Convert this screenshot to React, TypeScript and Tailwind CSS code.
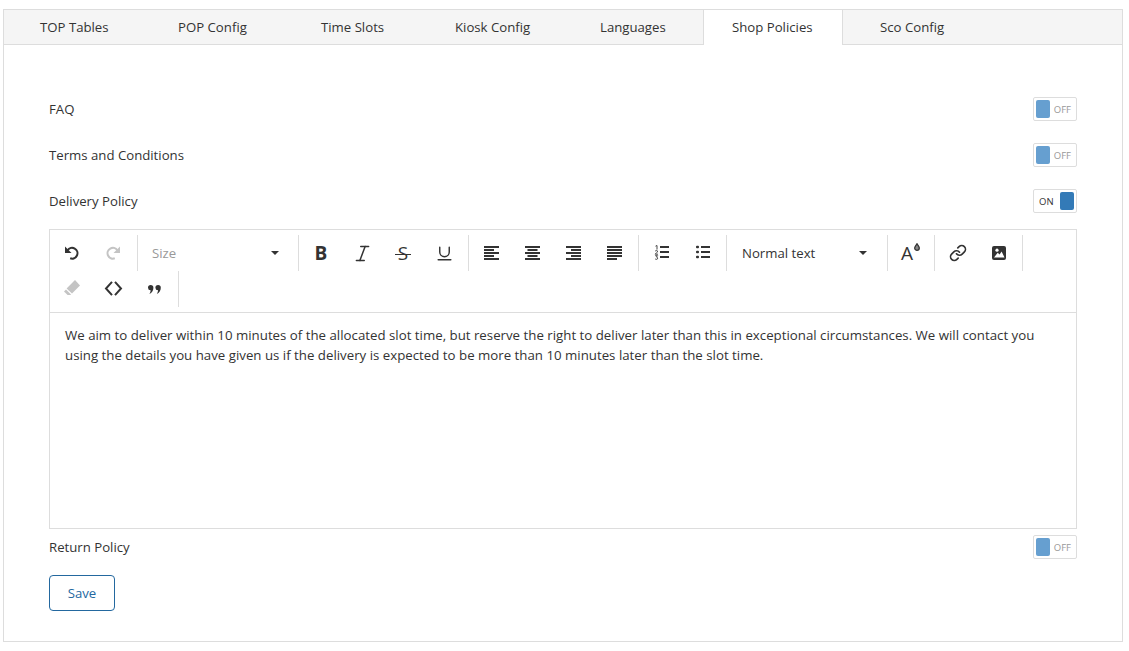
import React from "react";
import { Italic, Underline, Link } from "lucide-react";

const C = "#333";
const MUTED = "#c4c4c4";

function Toggle({ on }: { on?: boolean }) {
  return (
    <div className="w-[44px] h-[24px] border border-[#ddd] rounded-[2px] bg-white flex items-center justify-between px-[2px] text-[9.5px] leading-none">
      {on ? (
        <>
          <span className="ml-[3px] pt-[1px] text-[#333]">ON</span>
          <span className="w-[14px] h-[18px] rounded-[2px] bg-[#337ab7]" />
        </>
      ) : (
        <>
          <span className="w-[14px] h-[18px] rounded-[2px] bg-[#669fd0]" />
          <span className="mr-[3px] pt-[1px] text-[#999]">OFF</span>
        </>
      )}
    </div>
  );
}

function Row({ label, on, className }: { label: string; on?: boolean; className: string }) {
  return (
    <div className={"flex items-center justify-between h-[24px] " + className}>
      <span className="pt-[1px]">{label}</span>
      <Toggle on={on} />
    </div>
  );
}

function Btn({ children }: { children: React.ReactNode }) {
  return <div className="w-[41px] h-[36px] flex items-center justify-center text-[#333]">{children}</div>;
}

function Group({ children, flush }: { children: React.ReactNode; flush?: boolean }) {
  return <div className={"flex h-[36px] pr-[4px] border-r border-[#ddd] " + (flush ? "" : "pl-[1px]")}>{children}</div>;
}

function Caret() {
  return <span className="w-0 h-0 border-x-[4px] border-x-transparent border-t-[4px] border-t-[#333]" />;
}

function Svg({ children }: { children: React.ReactNode }) {
  return (
    <svg width="17" height="18" viewBox="0 0 17 18" className="shrink-0 overflow-visible">
      {children}
    </svg>
  );
}

function Bars({ rows }: { rows: [number, number][] }) {
  return (
    <Svg>
      {rows.map(([x, w], i) => (
        <rect key={i} x={x} y={2 + i * 3} width={w} height={2} fill={C} />
      ))}
    </Svg>
  );
}

function UndoIcon({ color, flip }: { color: string; flip?: boolean }) {
  return (
    <Svg>
      <g transform={flip ? "translate(18 0) scale(-1 1)" : undefined}>
        <path d="M2 2.5 L2 9 L8.5 9 Z" fill={color} />
        <path d="M4.6 6.2 A5.4 5.4 0 1 1 7.2 14.3" fill="none" stroke={color} strokeWidth="2" />
      </g>
    </Svg>
  );
}

function OlIcon() {
  return (
    <Svg>
      <rect x="8" y="2" width="9" height="2" fill={C} />
      <rect x="8" y="7" width="9" height="2" fill={C} />
      <rect x="8" y="12" width="9" height="2" fill={C} />
      <path d="M3.5 2.2 L5 1.5 V5.5" fill="none" stroke={C} strokeWidth="0.9" />
      <path d="M3.2 7 Q5 5.8 5.6 7 Q5.6 8 3.2 10.2 H6" fill="none" stroke={C} strokeWidth="0.9" />
      <path d="M3.2 11.7 H5.6 L4.4 13 Q6 13.3 5.6 14.8 Q4.8 15.8 3.2 15" fill="none" stroke={C} strokeWidth="0.9" />
    </Svg>
  );
}

function UlIcon() {
  return (
    <Svg>
      {[2, 7, 12].map((y) => (
        <g key={y}>
          <rect x="3" y={y - 0.25} width="3" height="2.5" rx="1" fill={C} />
          <rect x="8" y={y} width="9" height="2" fill={C} />
        </g>
      ))}
    </Svg>
  );
}

function ImageIcon() {
  return (
    <Svg>
      <rect x="3" y="2" width="14" height="14" rx="2" fill={C} />
      <circle cx="8" cy="6.2" r="1.6" fill="#fff" />
      <path d="M5 13.5 L8.7 8.8 L10.6 10.6 L12.6 7.4 L15.5 13.5 Z" fill="#fff" />
    </Svg>
  );
}

function EraserIcon() {
  return (
    <Svg>
      <path d="M12 0 L17 5.5 L9 13.6 L3.6 8.4 Z" fill={MUTED} />
      <path d="M3 9.4 L8 14.4 L7.4 15 L4.6 15 L1 11.4 Z" fill={MUTED} />
    </Svg>
  );
}

function CodeIcon() {
  return (
    <Svg>
      <path d="M8 1.8 L2 8.5 L8 15.2 M11 1.8 L17 8.5 L11 15.2" fill="none" stroke={C} strokeWidth="2" />
    </Svg>
  );
}

const COMMA = "M3 7.7 a2.7 2.7 0 1 1 5.4 0 c0 3 -1.5 5 -4 6.3 c.8-1.3 1.3-2.8 1.2-3.7 a2.7 2.7 0 0 1 -2.6-2.6z";

function QuoteIcon() {
  return (
    <Svg>
      <path d={COMMA} fill={C} />
      <path d={COMMA} fill={C} transform="translate(7.4 0)" />
    </Svg>
  );
}

function ColorIcon() {
  return (
    <span className="relative block text-[19px] leading-none text-[#333] -ml-[5px]">
      A
      <svg width="6" height="8" viewBox="0 0 6 8" className="absolute left-[13px] top-[-1px]">
        <path d="M3 .7 C4 2.5 5.3 3.6 5.3 5 a2.3 2.3 0 1 1 -4.6 0 C.7 3.6 2 2.5 3 .7z" fill="#888" stroke={C} strokeWidth="1.3" />
      </svg>
    </span>
  );
}

function Select({ label, muted, cls }: { label: string; muted?: boolean; cls: string }) {
  return (
    <div className={"w-[156px] h-[36px] flex items-center justify-between " + cls}>
      <span className={"pt-[1px] " + (muted ? "text-[#999]" : "text-[#333]")}>{label}</span>
      <Caret />
    </div>
  );
}

const tabs = [
  { label: "TOP Tables", cls: "w-[138px] pl-[36px]" },
  { label: "POP Config", cls: "w-[143px] pl-[36px]" },
  { label: "Time Slots", cls: "w-[134px] pl-[36px]" },
  { label: "Kiosk Config", cls: "w-[145px] pl-[36px]" },
  { label: "Languages", cls: "w-[139px] pl-[36px]" },
  { label: "Shop Policies", cls: "w-[140px] pl-[28px] bg-white border-x border-[#ddd]" },
  { label: "Sco Config", cls: "pl-[37px]" },
];

export default function App() {
  return (
    <div className="bg-white h-[651px] pt-[9px] pl-[3px] pr-[6px] text-[13.2px] text-[#333] font-['Open_Sans','Noto_Sans',sans-serif]">
      <div className="border border-[#ddd] h-[633px]">
        <div className="flex h-[35px] bg-[#f5f5f5] border-b border-[#ddd]">
          {tabs.map((t) => (
            <div key={t.label} className={"h-[35px] flex items-center whitespace-nowrap " + t.cls}>
              {t.label}
            </div>
          ))}
        </div>
        <div className="px-[45px] pt-[52px]">
          <Row label="FAQ" className="mb-[22px]" />
          <Row label="Terms and Conditions" className="mb-[22px]" />
          <Row label="Delivery Policy" on className="mb-[16px]" />
          <div className="border border-[#ddd] h-[300px]">
            <div className="flex flex-wrap pt-[5px] border-b border-[#ddd] h-[83px] content-start">
              <Group>
                <Btn><UndoIcon color={C} /></Btn>
                <Btn><UndoIcon color={MUTED} flip /></Btn>
              </Group>
              <Group flush>
                <Select label="Size" muted cls="pl-[14px] pr-[15px]" />
              </Group>
              <Group>
                <Btn><span className="font-bold text-[19px] leading-none text-[#333] ml-[1px]">B</span></Btn>
                <Btn><Italic size={21} strokeWidth={1.7} className="ml-[1px]" /></Btn>
                <Btn>
                  <span className="relative block text-[19px] leading-none text-[#333] ml-[1px]">
                    S
                    <span className="absolute left-[-3px] right-[-3px] top-[10px] h-[1px] bg-[#333]" />
                  </span>
                </Btn>
                <Btn><Underline size={19} strokeWidth={1.8} className="ml-[1px]" /></Btn>
              </Group>
              <Group>
                <Btn><Bars rows={[[2, 15], [2, 10], [2, 15], [2, 10], [2, 15]]} /></Btn>
                <Btn><Bars rows={[[2, 15], [4.5, 10], [2, 15], [4.5, 10], [2, 15]]} /></Btn>
                <Btn><Bars rows={[[2, 15], [7, 10], [2, 15], [7, 10], [2, 15]]} /></Btn>
                <Btn><Bars rows={[[2, 15], [2, 15], [2, 15], [2, 15], [2, 10]]} /></Btn>
              </Group>
              <Group>
                <Btn><OlIcon /></Btn>
                <Btn><UlIcon /></Btn>
              </Group>
              <Group flush>
                <Select label="Normal text" cls="pl-[15px] pr-[16px]" />
              </Group>
              <Group>
                <Btn><ColorIcon /></Btn>
              </Group>
              <Group>
                <Btn><Link size={18} strokeWidth={2.2} className="ml-[2px]" /></Btn>
                <Btn><ImageIcon /></Btn>
              </Group>
              <Group>
                <Btn><EraserIcon /></Btn>
                <Btn><CodeIcon /></Btn>
                <Btn><QuoteIcon /></Btn>
              </Group>
            </div>
            <div className="px-[15px] pt-[12px] leading-[20px] text-[13.27px]">
              We aim to deliver within 10 minutes of the allocated slot time, but reserve the right to deliver later than this in exceptional circumstances. We will contact you using the details you have given us if the delivery is expected to be more than 10 minutes later than the slot time.
            </div>
          </div>
          <Row label="Return Policy" className="mt-[6px]" />
          <button className="mt-[16px] w-[66px] h-[36px] pt-[1px] border border-[#23689f] rounded-[4px] text-[#23689f] bg-white">Save</button>
        </div>
      </div>
    </div>
  );
}
